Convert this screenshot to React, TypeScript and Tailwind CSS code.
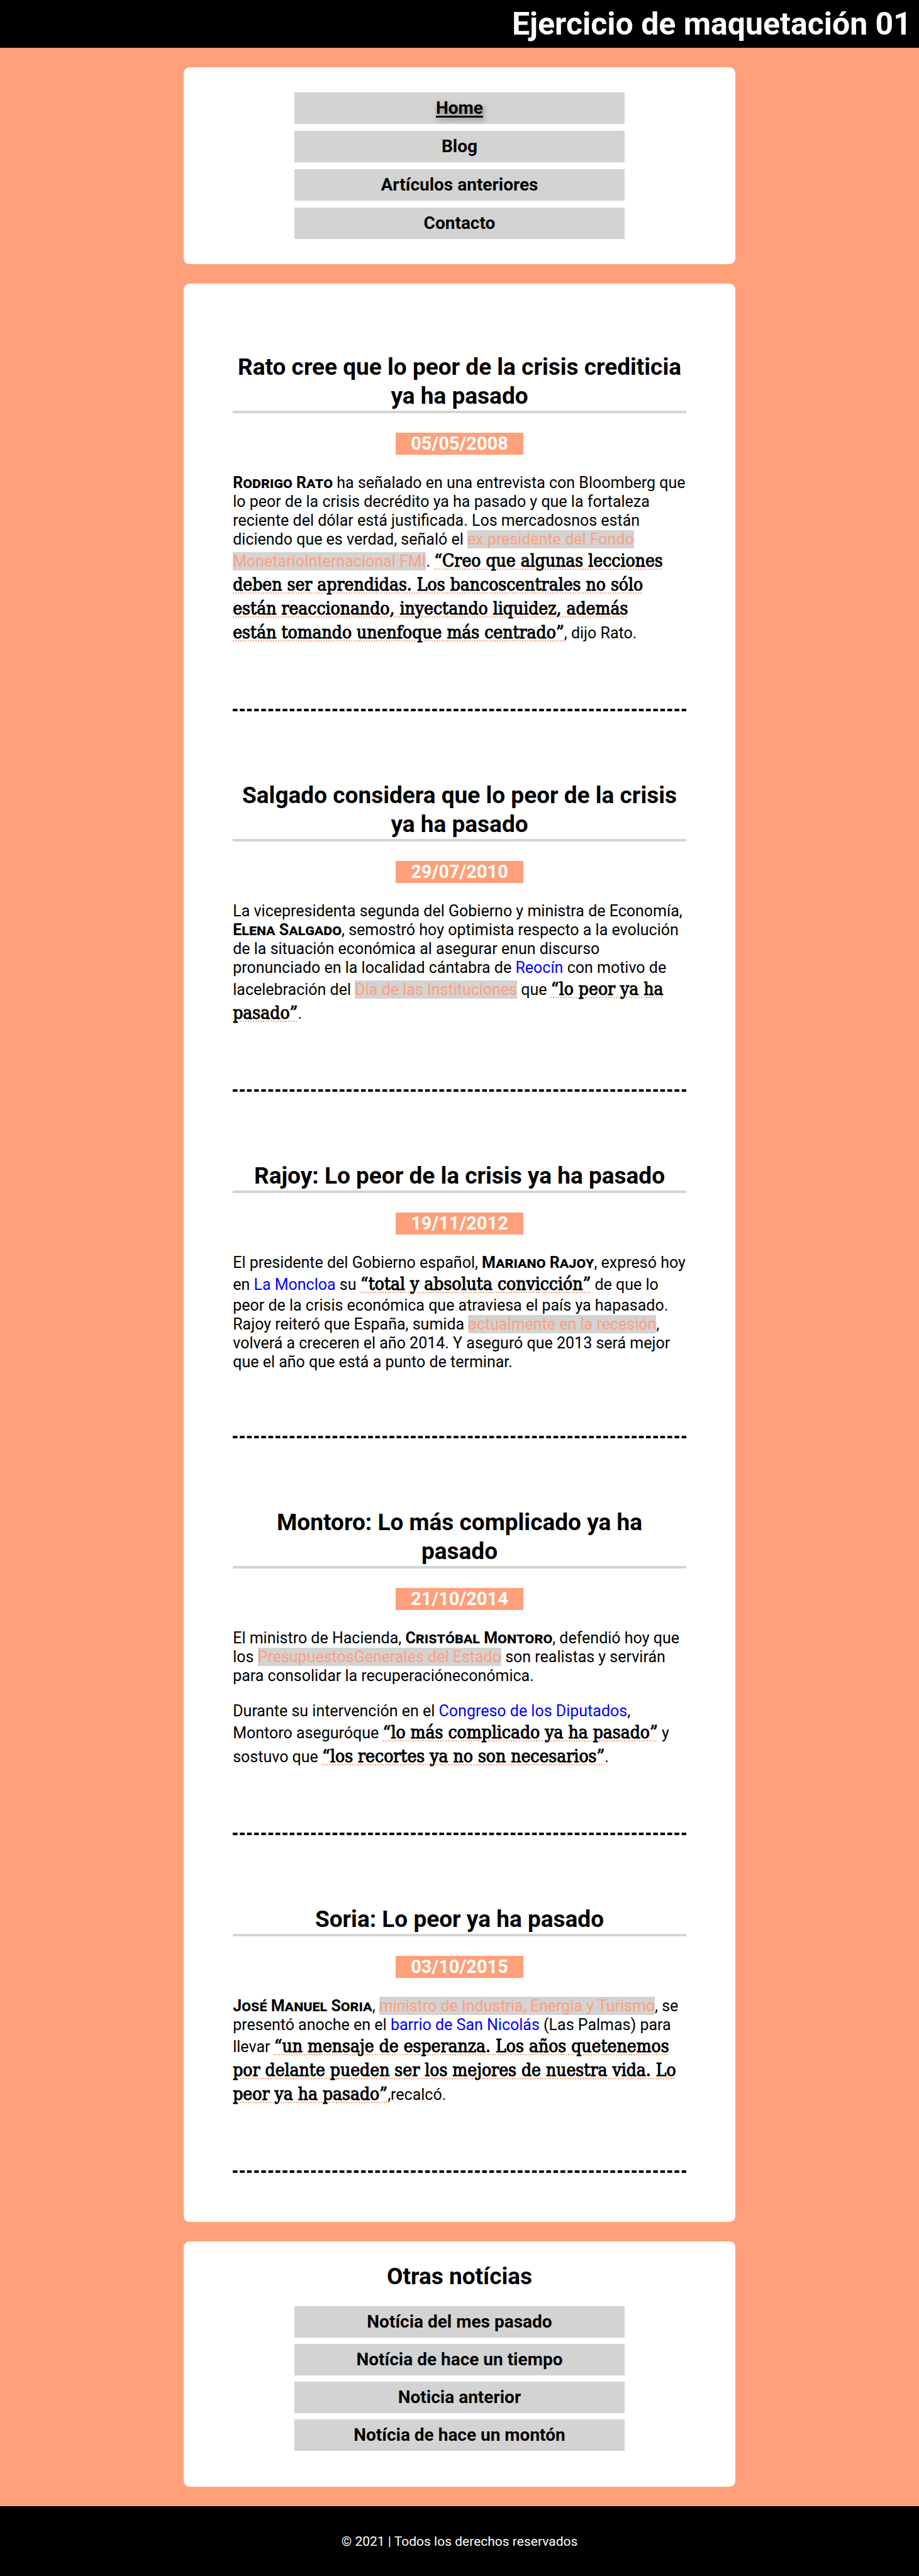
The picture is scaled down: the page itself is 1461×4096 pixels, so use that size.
import type { ReactNode } from "react";

function MenuLink({ children, active = false }: { children: ReactNode; active?: boolean }) {
  return (
    <li className="bg-[#d3d3d3] text-center">
      <a
        href="#"
        className={
          active
            ? "block text-[28px] leading-[50px] font-bold underline decoration-[3px] underline-offset-[3px] [text-shadow:2px_4px_8px_#777]"
            : "block text-[28px] leading-[50px] font-bold"
        }
      >
        {children}
      </a>
    </li>
  );
}

function Person({ children }: { children: ReactNode }) {
  return <strong className="font-bold [font-variant:small-caps]">{children}</strong>;
}

function Mark({ children }: { children: ReactNode }) {
  return <em className="bg-[#d3d3d3] text-[#ffa07a] not-italic">{children}</em>;
}

function Place({ children }: { children: ReactNode }) {
  return <span className="text-[#0000ff]">{children}</span>;
}

function Quote({ children }: { children: ReactNode }) {
  return (
    <q className="font-['Roboto_Slab','DejaVu_Serif_Condensed','DejaVu_Serif',serif] text-[28px] leading-[38px] font-medium underline decoration-[#ffa07a] decoration-dotted decoration-2 underline-offset-[3px] [-webkit-text-stroke:1px_#000] [quotes:none]">
      {children}
    </q>
  );
}

function Article({ title, date, children }: { title: ReactNode; date: string; children: ReactNode }) {
  return (
    <article className="mb-[78px] last:mb-0">
      <h2 className="border-b-4 border-[#d3d3d3] pt-0.5 text-center text-[37px] leading-[46px] font-bold">{title}</h2>
      <div className="mt-[31px] text-center">
        <time className="inline-block bg-[#ffa07a] px-6 align-top text-[29px] leading-[35px] font-bold text-white">{date}</time>
      </div>
      <div className="mt-[30px] flex flex-col gap-[26px] text-[25px] leading-[30px]">{children}</div>
      <hr className="mt-[102px] h-1 border-0 bg-[linear-gradient(90deg,#000_68%,transparent_68%)] bg-[length:calc((100%+4px)/64)_100%]" />
    </article>
  );
}

export default function App() {
  return (
    <div className="min-h-screen bg-[#ffa07a] font-[Roboto,sans-serif] text-black">
      <header className="bg-black px-3 py-2 text-right">
        <h1 className="text-[50px] leading-[60px] font-bold text-white">Ejercicio de maquetación 01</h1>
      </header>

      <div className="mx-auto my-[31px] flex w-3/5 flex-col gap-[31px]">
        <nav className="rounded-[9px] bg-white py-10">
          <ul className="mx-auto flex w-3/5 flex-col gap-[11px]">
            <MenuLink active>Home</MenuLink>
            <MenuLink>Blog</MenuLink>
            <MenuLink>Artículos anteriores</MenuLink>
            <MenuLink>Contacto</MenuLink>
          </ul>
        </nav>

        <main className="rounded-[9px] bg-white px-[78px] pt-[108px] pb-[78px] [&>article+article]:pt-[31px]">
          <Article title="Rato cree que lo peor de la crisis crediticia ya ha pasado" date="05/05/2008">
            <p>
              <Person>Rodrigo Rato</Person> ha señalado en una entrevista con Bloomberg que lo peor de la crisis decrédito ya ha
              pasado y que la fortaleza reciente del dólar está justificada. Los mercadosnos están diciendo que es verdad, señaló
              el <Mark>ex presidente del Fondo MonetarioInternacional FMI</Mark>.{" "}
              <Quote>
                “Creo que algunas lecciones deben ser aprendidas. Los bancoscentrales no sólo están reaccionando, inyectando
                liquidez, además
                <br />
                están tomando unenfoque más centrado”
              </Quote>
              , dijo Rato.
            </p>
          </Article>

          <Article title="Salgado considera que lo peor de la crisis ya ha pasado" date="29/07/2010">
            <p>
              La vicepresidenta segunda del Gobierno y ministra de Economía, <Person>Elena Salgado</Person>, semostró hoy
              optimista respecto a la evolución de la situación económica al asegurar enun discurso pronunciado en la localidad
              cántabra de <Place>Reocín</Place> con motivo de lacelebración del <Mark>Día de las Instituciones</Mark> que{" "}
              <Quote>“lo peor ya ha pasado”</Quote>.
            </p>
          </Article>

          <Article title="Rajoy: Lo peor de la crisis ya ha pasado" date="19/11/2012">
            <p>
              El presidente del Gobierno español, <Person>Mariano Rajoy</Person>, expresó hoy en <Place>La Moncloa</Place> su{" "}
              <Quote>“total y absoluta convicción”</Quote> de que lo peor de la crisis económica que atraviesa el país ya
              hapasado. Rajoy reiteró que España, sumida <Mark>actualmente en la recesión</Mark>, volverá a creceren el año
              2014. Y aseguró que 2013 será mejor que el año que está a punto de terminar.
            </p>
          </Article>

          <Article
            title={
              <>
                Montoro: Lo más complicado ya ha
                <br />
                pasado
              </>
            }
            date="21/10/2014"
          >
            <p>
              El ministro de Hacienda, <Person>Cristóbal Montoro</Person>, defendió hoy que los{" "}
              <Mark>PresupuestosGenerales del Estado</Mark> son realistas y servirán para consolidar la recuperacióneconómica.
            </p>
            <p>
              Durante su intervención en el <Place>Congreso de los Diputados</Place>, Montoro aseguróque{" "}
              <Quote>“lo más complicado ya ha pasado”</Quote> y sostuvo que <Quote>“los recortes ya no son necesarios”</Quote>.
            </p>
          </Article>

          <Article title="Soria: Lo peor ya ha pasado" date="03/10/2015">
            <p>
              <Person>José Manuel Soria</Person>, <Mark>ministro de Industria, Energía y Turismo</Mark>, se presentó anoche en
              el <Place>barrio de San Nicolás</Place> (Las Palmas) para llevar{" "}
              <Quote>
                “un mensaje de esperanza. Los años quetenemos por delante pueden ser los mejores de nuestra vida. Lo peor ya ha
                pasado”
              </Quote>
              ,recalcó.
            </p>
          </Article>
        </main>

        <aside className="rounded-[9px] bg-white pt-[33px] pb-[57px]">
          <h2 className="mb-6 text-center text-[37px] leading-[46px] font-bold">Otras notícias</h2>
          <ul className="mx-auto flex w-3/5 flex-col gap-2.5">
            <MenuLink>Notícia del mes pasado</MenuLink>
            <MenuLink>Notícia de hace un tiempo</MenuLink>
            <MenuLink>Noticia anterior</MenuLink>
            <MenuLink>Notícia de hace un montón</MenuLink>
          </ul>
        </aside>
      </div>

      <footer className="bg-black pt-[41px] pb-10 text-center text-[21px] leading-[31px] text-white">
        <p>© 2021 | Todos los derechos reservados</p>
      </footer>
    </div>
  );
}
